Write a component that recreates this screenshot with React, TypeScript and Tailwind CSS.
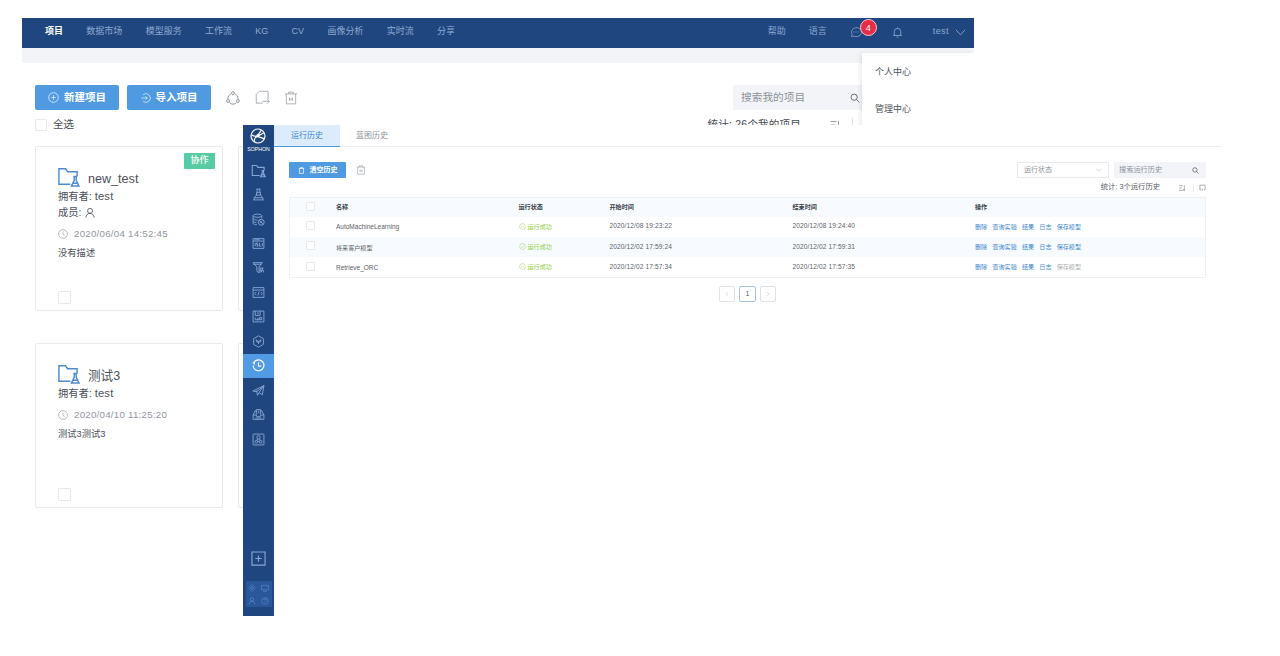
import type { ReactNode } from "react";

type IconProps = { className?: string; children: ReactNode; w?: number };

function Icon({ className = "", children, w = 1.5 }: IconProps) {
  return (
    <svg viewBox="0 0 24 24" fill="none" stroke="currentColor" strokeWidth={w} className={"shrink-0 " + className}>
      {children}
    </svg>
  );
}

const folderLab = (
  <>
    <path d="M14 20H2V4h7l2 3h10v5" />
    <path d="M17 12h4M18 12v4l-3 6h8l-3-6v-4M16.500 19h5" />
  </>
);
const trash = (
  <>
    <path d="M1.500 5h21M4 5v17h16V5M8 5V2h8v3M9.500 11v6M14.500 11v6M9.500 14h5" />
  </>
);
const search = (
  <>
    <circle cx="10" cy="10" r="7.500" />
    <path d="m15.500 15.500 7 7" />
  </>
);
const clock = (
  <>
    <circle cx="12" cy="12" r="10.500" />
    <path d="M12 5.500V13l4 2.500" />
  </>
);
const sort = <path d="M3 5h12M3 12h9M3 19h18M19 4v14M16 15l3 4" />;

const sideIcons: ReactNode[] = [
  folderLab,
  <>
    <path d="M8 2h8M9.500 2v4l-1 3v4L4 18h16l-4.500-5V9l-1-3V2M2 22h20M7 13h10M8.500 8h7M4 18v4M20 18v4" />
  </>,
  <>
    <ellipse cx="10" cy="5" rx="8" ry="3" />
    <path d="M2 5v14c0 1.500 3 2.500 7 2.500M2 10c0 2 4 3 8 3M18 5v5M2 15c0 1.500 3 2.500 6 2.500" />
    <circle cx="17" cy="17" r="5.500" />
    <path d="m13 13 8 8M14 19l5-5" />
  </>,
  <>
    <path d="M2 3h20v18H2zM2 7.500h20M5 5.200h9M6 11v6M11 11H8.500v3H11v3H8.500M17 17h-3v-6M19 11v6" />
  </>,
  <>
    <path d="M2 3h17l-6 8v11l-4-3v-8zM2 6h15" />
    <path d="M15 13h6M15 13v8M15 17h5M20 13l-3 8M21 17v4" />
  </>,
  <>
    <path d="M2 3h20v18H2zM2 7.500h20M8 11l-3 3 3 3M16 11l3 3-3 3M13 10.500l-2 7" />
  </>,
  <>
    <path d="M2 2h20v20H2zM6 2v8h9V2M11 4v4M6 18v-4M9 18h2v-4M14 18v-4h4v4M6 18h12" />
  </>,
  <>
    <path d="m12 1.500 9 5.200v10.600l-9 5.200-9-5.200V6.700z" />
    <path d="m7 9 5 3 5-3M12 12v5M8 9v3l4 2 4-2V9" />
  </>,
  <>
    <path d="M4.500 5A10 10 0 1 1 2 12M4.500 5v5M1.500 8l3-3" />
    <path d="M12 6v7h5" />
  </>,
  <>
    <path d="M1.500 13 22 3l-3 17-6-4-3 5-1-7zM9 14 22 3M13 16l9-13M5 14.500l5-2" />
  </>,
  <>
    <path d="M2 13 6 5h2M22 13l-4-8h-2M2 13v8h20v-8h-6l-1 3H9l-1-3zM8 12V3h8v9M10.500 6h3M10.500 9h3M6 18.500h12" />
  </>,
  <>
    <rect x="2" y="2" width="20" height="20" rx="1" />
    <circle cx="12" cy="8" r="3" />
    <circle cx="8" cy="16" r="2.500" />
    <circle cx="16" cy="16" r="2.500" />
    <path d="m10.500 11-2 3M13.500 11l2 3M10.500 16h3" />
  </>,
];

const nav = ["数据市场", "模型服务", "工作流", "KG", "CV", "画像分析", "实时流", "分享"];

function Check({ className = "" }: { className?: string }) {
  return <span className={"block shrink-0 rounded-[1px] border border-[#e6e9ed] bg-white " + className} />;
}

type CardProps = { name: string; date: string; desc: string; shared?: boolean };

function ProjectCard({ name, date, desc, shared }: CardProps) {
  return (
    <article className="relative flex h-[165px] w-[188px] shrink-0 flex-col rounded-[2px] border border-[#e8eaee] pl-[22px] pt-[18px] text-[#4b5059]">
      {shared && (
        <span className="absolute right-[7px] top-[6px] flex h-[16px] w-[31px] items-center justify-center rounded-[1px] bg-[#56cba4] text-[9px] font-medium text-white">
          协作
        </span>
      )}
      <div className="flex h-[23px] items-start">
        <Icon className="-ml-[1px] size-[23px] text-[#4c8ccb]" w={1.5}>{folderLab}</Icon>
        <span className="ml-[8px] mt-[5px] text-[12.600px] leading-[18px]">{name}</span>
      </div>
      <p className="text-[10.300px] leading-[16px]">
        拥有者: <span className="text-[11.200px] tracking-[0.200px]">test</span>
      </p>
      {shared && (
        <p className="flex items-center text-[10.300px] leading-[16px]">
          成员:
          <Icon className="ml-[4px] size-[10px]" w={2}>
            <circle cx="12" cy="7" r="6" />
            <path d="M2 23c1-6 4-10 10-10s9 4 10 10" />
          </Icon>
        </p>
      )}
      <p className="mt-[5px] flex h-[16px] items-center text-[9.700px] tracking-[0.260px] text-[#92979f]">
        <Icon className="mr-[6px] size-[10px]">{clock}</Icon>
        {date}
      </p>
      <p className="mt-[4px] text-[9.300px] leading-[14px]">{desc}</p>
      <Check className="mb-[6px] mt-auto size-[13px]" />
    </article>
  );
}

function ProjectWindow() {
  return (
    <section className="h-[598px] w-[952px] overflow-hidden bg-white">
      <header className="flex h-[30px] items-center bg-[#20467f] pb-[2px] pl-[23px] pr-[8px] text-[9px] text-[#8da9d3]">
        <nav className="flex items-center gap-[23.300px]">
          <span className="font-bold text-white">项目</span>
          {nav.map((n) => (
            <span key={n}>{n}</span>
          ))}
        </nav>
        <div className="ml-auto flex items-center">
          <span>帮助</span>
          <span className="ml-[23px]">语言</span>
          <span className="relative ml-[23px]">
            <Icon className="size-[12px]">
              <path d="M3 21l1.500-4A10 9 0 1 1 9 20.500zM7 12h2M11 12h2M15 12h2" />
            </Icon>
            <span className="absolute -top-[7px] left-[10px] flex size-[17px] items-center justify-center rounded-full border border-[#f5c9d0] bg-[#e82c48] text-[9px] leading-[12px] text-white">
              4
            </span>
          </span>
          <Icon className="ml-[30px] size-[11px]" w={1.8}>
            <path d="M5 18V10a7 7 0 0 1 14 0v8M2.500 18.500h19M10 22h4M12 1v2" />
          </Icon>
          <span className="ml-[30px] tracking-[0.450px]">test</span>
          <Icon className="ml-[6px] size-[11px]" w={1.8}>
            <path d="m2 6 10 11L22 6" />
          </Icon>
        </div>
      </header>
      <div className="relative h-[15px] bg-[#f2f4f8]">
        <div className="absolute right-0 top-[5px] flex h-[80px] w-[112px] flex-col gap-[23px] bg-white pl-[13px] pt-[12px] text-[9px] leading-[14px] text-[#50555d] shadow-[-2px_0_4px_rgba(0,0,0,0.08)]">
          <span>个人中心</span>
          <span>管理中心</span>
        </div>
      </div>
      <div className="flex items-center pl-[13px] pr-[112px] pt-[22px]">
        <button className="flex h-[25px] w-[84px] items-center justify-center gap-[5px] rounded-[2px] bg-[#4f9ae0] text-[10.500px] font-bold text-white">
          <Icon className="size-[11px]">
            <circle cx="12" cy="12" r="10.500" />
            <path d="M12 7v10M7 12h10" />
          </Icon>
          新建项目
        </button>
        <button className="ml-[8px] flex h-[25px] w-[84px] items-center justify-center gap-[5px] rounded-[2px] bg-[#4f9ae0] text-[10.500px] font-bold text-white">
          <Icon className="size-[10px]">
            <path d="M5 4a10.500 10.500 0 1 1 0 16M1 12h14M11 8l4 4-4 4" />
          </Icon>
          导入项目
        </button>
        <Icon className="ml-[15px] size-[14px] text-[#858b93]">
          <circle cx="12" cy="3.500" r="2.500" />
          <circle cx="3.500" cy="17" r="2.500" />
          <circle cx="20.500" cy="17" r="2.500" />
          <path d="M8.500 5A9 9 0 0 0 3 13.500M15.500 5a9 9 0 0 1 5.500 8.500M6 20a9 9 0 0 0 12 0" />
        </Icon>
        <Icon className="ml-[15px] size-[15px] text-[#a3a8ae]">
          <path d="M12 21H2V7l5-5h14v12M12 18h11M19 14l4 4-4 4" />
        </Icon>
        <Icon className="ml-[14px] size-[14px] text-[#a3a8ae]">{trash}</Icon>
        <div className="ml-auto flex h-[25px] w-[129px] items-center justify-between bg-[#f3f4f8] pl-[8px] pr-[2px] text-[10.700px] text-[#8d9299]">
          搜索我的项目
          <Icon className="size-[10px] text-[#50555d]" w={2}>{search}</Icon>
        </div>
      </div>
      <div className="flex h-[27px] items-center pl-[13px] pt-[2px] text-[10.500px] text-[#444952]">
        <Check className="size-[12px]" />
        <span className="ml-[6px]">全选</span>
        <span className="ml-auto text-[10.500px] tracking-[0.220px]">统计: 26个我的项目</span>
        <Icon className="ml-[28px] size-[12px] text-[#777c84]">{sort}</Icon>
        <span className="ml-[11px] mr-[121px] h-[14px] w-px bg-[#dfe2e6]" />
      </div>
      <div className="flex flex-col gap-[32px] pl-[13px] pt-[9px]">
        <div className="flex gap-[15px]">
          <ProjectCard name="new_test" date="2020/06/04 14:52:45" desc="没有描述" shared />
          <div className="h-[165px] w-[188px] rounded-[2px] border border-[#e8eaee]" />
        </div>
        <div className="flex gap-[15px]">
          <ProjectCard name="测试3" date="2020/04/10 11:25:20" desc="测试3测试3" />
          <div className="h-[165px] w-[188px] rounded-[2px] border border-[#e8eaee]" />
        </div>
      </div>
    </section>
  );
}

function Sidebar() {
  return (
    <aside className="flex w-[31px] shrink-0 flex-col items-center bg-[#20467f] text-[#86a6d8]">
      <div className="flex h-[33px] flex-col items-center pt-[3px] text-white">
        <Icon className="size-[16px]" w={1.8}>
          <circle cx="12" cy="12" r="10.500" />
          <path d="M2 10c5 3 9 3 10 1l5-8M12 12l9-5M12 13l9 3M11 13c-4 1-5 4-4 8" />
          <circle cx="12" cy="11.500" r="1.500" fill="currentColor" />
        </Icon>
        <span className="mt-[2px] text-[5.200px] leading-[6px]">SOPHON</span>
      </div>
      {sideIcons.map((icon, i) => (
        <div
          key={i}
          className={
            "flex h-[24.450px] w-full items-center justify-center " + (i === 8 ? "bg-[#519be4] text-white" : "")
          }
        >
          <Icon className={i === 0 ? "size-[15px]" : "size-[13px]"} w={i === 8 ? 2.2 : 1.7}>{icon}</Icon>
        </div>
      ))}
      <Icon className="mt-auto size-[15px]" w={1.8}>
        <path d="M1.500 1.500h21v21h-21zM12 7v10M7 12h10" />
      </Icon>
      <div className="mb-[9px] mt-[15px] grid grid-cols-2 text-[#5e8acb]">
        <span className="flex size-[13px] items-center justify-center bg-[#2a569a]">
          <Icon className="size-[8px]" w={2}>
            <circle cx="12" cy="12" r="4" />
            <circle cx="12" cy="12" r="9" strokeDasharray="4 2" />
          </Icon>
        </span>
        <span className="flex size-[13px] items-center justify-center bg-[#2a569a]">
          <Icon className="size-[8px]" w={2}>
            <path d="M2 4h20v14H2zM7 22h10" />
          </Icon>
        </span>
        <span className="flex size-[13px] items-center justify-center bg-[#2a569a]">
          <Icon className="size-[8px]" w={2}>
            <circle cx="12" cy="7" r="5" />
            <path d="M3 22c0-12 18-12 18 0" />
          </Icon>
        </span>
        <span className="flex size-[13px] items-center justify-center bg-[#2a569a]">
          <Icon className="size-[8px]" w={2}>
            <circle cx="12" cy="12" r="10" />
            <path d="M8 9c0-5 8-4 8 0 0 3-4 2-4 5M12 16v2" />
          </Icon>
        </span>
      </div>
    </aside>
  );
}

const rows = [
  { name: "AutoMachineLearning", start: "2020/12/08 19:23:22", end: "2020/12/08 19:24:40", save: true },
  { name: "将来客户模型", start: "2020/12/02 17:59:24", end: "2020/12/02 17:59:31", save: true },
  { name: "Retrieve_ORC", start: "2020/12/02 17:57:34", end: "2020/12/02 17:57:35", save: false },
];

const columns = "grid grid-cols-[46px_182.500px_91px_183px_182.500px_1fr] items-center ";

function HistoryTable() {
  return (
    <div className="border border-[#edf1f5] text-[6.100px] text-[#5c6168]">
      <div className={columns + "h-[18.500px] bg-[#f7fbff] pb-[2px] font-bold text-[#3c424b]"}>
        <Check className="ml-[16px] size-[9px]" />
        <span>名称</span>
        <span>运行状态</span>
        <span>开始时间</span>
        <span>结束时间</span>
        <span>操作</span>
      </div>
      {rows.map((r, i) => (
        <div key={r.name} className={columns + "h-[20.300px] pb-[1px] " + (i === 1 ? "bg-[#f7fbff]" : "bg-white")}>
          <Check className="mb-[1px] ml-[16px] size-[9px]" />
          <span className={"mt-[2px] " + (i === 1 ? "" : "text-[6.500px]")}>{r.name}</span>
          <span className="flex items-center gap-[2px] text-[#8fce3f]">
            <Icon className="size-[7px]">
              <circle cx="12" cy="12" r="10" />
              <path d="m7 12 4 4 6-7" />
            </Icon>
            运行成功
          </span>
          <span className="text-[6.600px] tracking-[0.110px]">{r.start}</span>
          <span className="text-[6.600px] tracking-[0.110px]">{r.end}</span>
          <span className="flex gap-[5.200px] text-[#3f88ce]">
            <span>删除</span>
            <span>查询实验</span>
            <span>结果</span>
            <span>日志</span>
            <span className={r.save ? "" : "text-[#a8acb1]"}>保存模型</span>
          </span>
        </div>
      ))}
    </div>
  );
}

function HistoryWindow() {
  return (
    <section className="absolute left-[243px] top-[125px] flex h-[491px] w-[978px] bg-white">
      <Sidebar />
      <div className="flex min-w-0 flex-1 flex-col">
        <div className="flex h-[22px] border-b border-[#e9ebee] text-[8px] text-[#8c9198]">
          <span className="flex h-[22px] w-[66px] items-center justify-center border-b border-[#4f9ae0] bg-[#dcecfc] text-[#3d86cc]">
            运行历史
          </span>
          <span className="ml-[16px] flex items-center">蓝图历史</span>
        </div>
        <div className="flex flex-col pl-[15px] pr-[15px] pt-[15px]">
          <div className="flex h-[16px] items-center text-[7px]">
            <button className="flex h-[16px] w-[57px] items-center justify-center gap-[5px] rounded-[1px] bg-[#4f9ae0] text-[7px] font-bold text-white">
              <Icon className="size-[7px]" w={2.4}>
                <path d="M3 5h18M5 5v17h14V5M8 5V2h8v3" />
              </Icon>
              清空历史
            </button>
            <Icon className="ml-[10px] size-[10px] text-[#a3a8ae]" w={1.7}>{trash}</Icon>
            <div className="ml-auto flex h-[16px] w-[92px] items-center justify-between border border-[#e7eaee] pl-[6px] pr-[6px] text-[#8c9198]">
              运行状态
              <Icon className="size-[6px] text-[#a9adb3]" w={2}>
                <path d="m2 7 10 10L22 7" />
              </Icon>
            </div>
            <div className="ml-[5px] flex h-[16px] w-[92px] items-center justify-between bg-[#f2f4f8] pl-[5px] pr-[7px] text-[7.200px] text-[#8c9198]">
              搜索运行历史
              <Icon className="size-[7px] text-[#50555d]" w={2.4}>{search}</Icon>
            </div>
          </div>
          <div className="flex h-[19px] items-center justify-end text-[7.300px] text-[#555a62]">
            <span>统计: 3个运行历史</span>
            <Icon className="ml-[18px] size-[8px] text-[#7e838a]" w={1.8}>{sort}</Icon>
            <span className="ml-[7px] h-[8px] w-px bg-[#e7eaee]" />
            <Icon className="ml-[5px] size-[7px] text-[#7e838a]" w={2.2}>
              <path d="M8 20H3V4h18v16h-4M10 16l3 4-3 3" />
            </Icon>
          </div>
          <HistoryTable />
          <div className="mt-[7.500px] flex justify-center gap-[4px] text-[7px]">
            <span className="flex size-[16.500px] items-center justify-center rounded-[2px] border border-[#dfe3e7] text-[#c0c4c9]">
              <Icon className="size-[6px]" w={2}><path d="M17 4 7 12l10 8" /></Icon>
            </span>
            <span className="flex size-[16.500px] items-center justify-center rounded-[2px] border border-[#a9c3dc] text-[#4a5d72]">1</span>
            <span className="flex size-[16.500px] items-center justify-center rounded-[2px] border border-[#dfe3e7] text-[#c0c4c9]">
              <Icon className="size-[6px]" w={2}><path d="m7 4 10 8-10 8" /></Icon>
            </span>
          </div>
        </div>
      </div>
    </section>
  );
}

export default function App() {
  return (
    <main className="relative h-[656px] w-[1280px] overflow-hidden whitespace-nowrap bg-white pl-[22px] pt-[18px] font-['Liberation_Sans','Noto_Sans_CJK_SC',sans-serif]">
      <ProjectWindow />
      <HistoryWindow />
    </main>
  );
}
